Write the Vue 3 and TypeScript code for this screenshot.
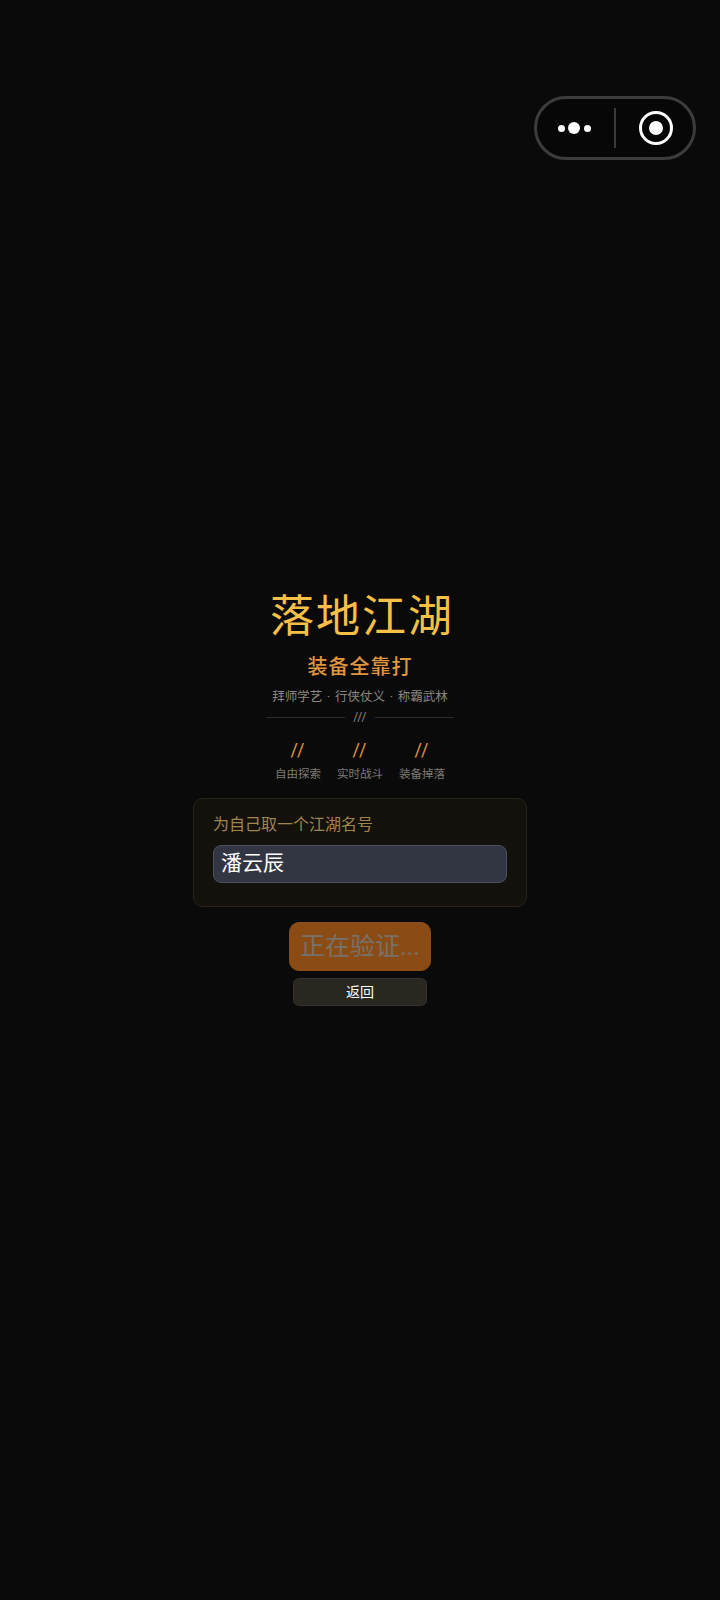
<script setup lang="ts">
const features: string[] = ['自由探索', '实时战斗', '装备掉落']
</script>

<template>
  <div class="page">
    <div class="capsule">
      <div class="dots"><i class="dot"></i><i class="dot big"></i><i class="dot"></i></div>
      <div class="sep"></div>
      <div class="target"><i></i></div>
    </div>
    <h1 class="title">落地江湖</h1>
    <div class="subtitle">装备全靠打</div>
    <div class="tagline">拜师学艺 · 行侠仗义 · 称霸武林</div>
    <div class="divider"><span class="line"></span><span class="slashes">///</span><span class="line"></span></div>
    <div class="features">
      <div v-for="f in features" :key="f" class="feature">
        <span class="mark">//</span>
        <span class="name">{{ f }}</span>
      </div>
    </div>
    <div class="card">
      <div class="label">为自己取一个江湖名号</div>
      <div class="input">潘云辰</div>
    </div>
    <button class="primary">正在验证...</button>
    <button class="back">返回</button>
  </div>
</template>

<style>
html, body { margin: 0; background: #0a0a0a; }
</style>

<style scoped>
.page {
  position: relative;
  box-sizing: border-box;
  width: 720px;
  height: 1600px;
  padding-top: 590px;
  display: flex;
  flex-direction: column;
  align-items: center;
  background: #0b0a0a;
  font-family: Roboto, "Noto Sans CJK SC", sans-serif;
}
.capsule {
  position: absolute;
  left: 534px;
  top: 96px;
  box-sizing: border-box;
  width: 162px;
  height: 64px;
  display: flex;
  align-items: center;
  border: 3px solid #3c3c3c;
  border-radius: 32px;
  background: #070707;
}
.dots { width: 74px; display: flex; align-items: center; justify-content: center; gap: 3.5px; }
.dot { width: 7px; height: 7px; border-radius: 50%; background: #fff; }
.dot.big { width: 12px; height: 12px; }
.sep { margin-left: 3px; width: 2px; height: 40px; background: #3a3a3a; }
.target {
  flex: 1;
  padding-left: 3px;
  display: flex;
  align-items: center;
  justify-content: center;
}
.target i {
  box-sizing: border-box;
  width: 34px;
  height: 34px;
  border: 3.5px solid #fff;
  border-radius: 50%;
  display: flex;
  align-items: center;
  justify-content: center;
}
.target i::after {
  content: "";
  width: 14px;
  height: 14px;
  border-radius: 50%;
  background: #fff;
}
.title {
  margin: -1px 0 0 4px;
  font-size: 44px;
  line-height: 56px;
  font-weight: 400;
  letter-spacing: 2px;
  color: #f6bf45;
}
.subtitle {
  margin-top: 8px;
  font-size: 20px;
  line-height: 28px;
  font-weight: 500;
  letter-spacing: 1px;
  color: #e0963f;
}
.tagline {
  margin-top: 6px;
  font-size: 12.5px;
  line-height: 20px;
  word-spacing: 1.7px;
  color: #8a8780;
}
.divider {
  margin-top: 2px;
  width: 188px;
  display: flex;
  align-items: center;
  gap: 8px;
}
.line { flex: 1; height: 1px; background: #2e2b26; }
.slashes { font-size: 12px; line-height: 16px; color: #8a8780; letter-spacing: 0.5px; }
.features {
  margin-top: 12px;
  display: flex;
  gap: 16px;
}
.feature { display: flex; flex-direction: column; align-items: center; }
.mark { font-size: 18px; line-height: 26px; letter-spacing: 1px; color: #e0963f; }
.name { margin-top: 2px; font-size: 11.5px; line-height: 18px; color: #7d7a74; }
.card {
  box-sizing: border-box;
  margin-top: 15px;
  width: 334px;
  height: 109px;
  padding: 15px 19px;
  border: 1px solid #26231e;
  border-radius: 10px;
  background: #14110d;
}
.label { font-size: 16px; line-height: 22px; color: #9f8650; }
.input {
  box-sizing: border-box;
  margin-top: 9px;
  height: 38px;
  padding: 0 7px;
  border: 1px solid #4a4d5c;
  border-radius: 8px;
  background: #323542;
  color: #fff;
  font-size: 21px;
  line-height: 34px;
}
button { font-family: inherit; padding: 0; }
.primary {
  margin-top: 15px;
  width: 142px;
  height: 49px;
  padding-bottom: 5px;
  border: 1px solid #8a4c16;
  border-radius: 10px;
  background: #8a4c14;
  color: #78716a;
  font-size: 25px;
  white-space: nowrap;
}
.back {
  margin-top: 7px;
  width: 134px;
  height: 28px;
  padding-bottom: 2px;
  border: 1px solid #35322c;
  border-radius: 6px;
  background: #2a2620;
  color: #fff;
  font-size: 14px;
}
</style>
